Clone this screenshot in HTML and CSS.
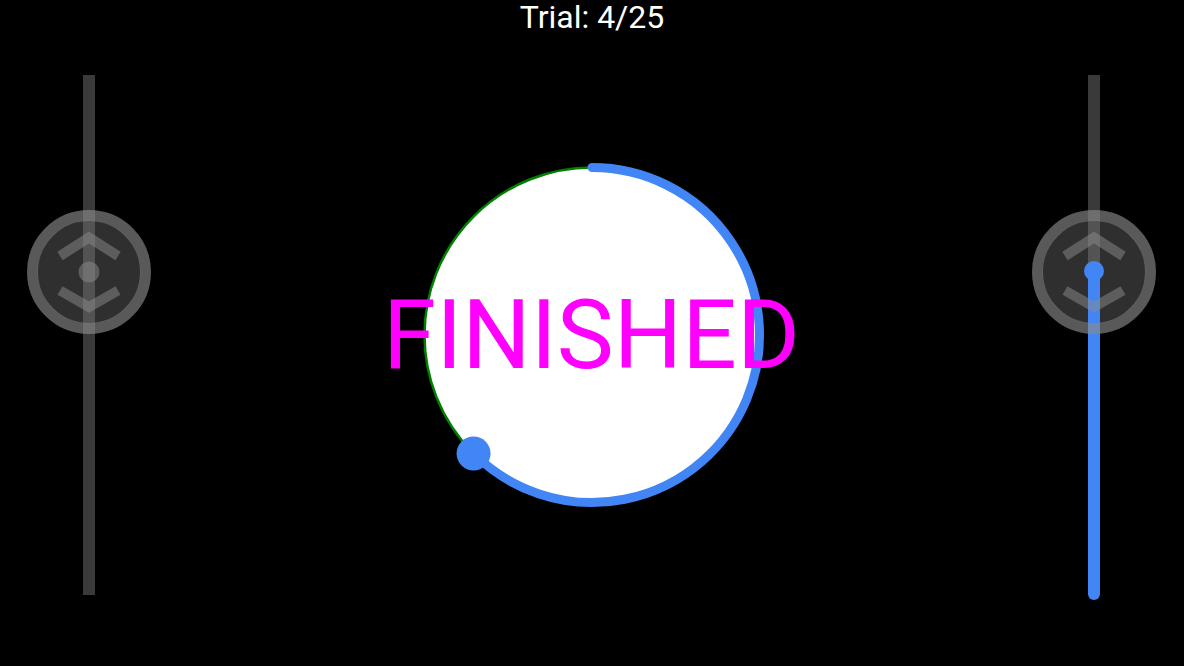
FILE: index.html
```html
<!DOCTYPE html>
<html lang="en">
<head>
<meta charset="utf-8">
<title>Trial</title>
<link rel="stylesheet" href="styles.css">
</head>
<body>
<header class="title">Trial: 4/25</header>
<main class="row">
  <div class="slider">
    <svg class="slider-svg" width="124" height="530" viewBox="0 0 124 530">
      <circle class="knob-inner" cx="62" cy="197" r="51.5"/>
      <rect class="track" x="56" y="0" width="12" height="520"/>
      <g transform="translate(62 197)">
        <circle class="knob-ring" r="56.5"/>
        <polyline class="chev" points="-29,-16 0,-34.5 29,-16"/>
        <polyline class="chev" points="-29,18.5 0,35 29,18.5"/>
        <circle class="knob-dot" r="10.5"/>
      </g>
    </svg>
  </div>
  <div class="stage">
    <div class="stage-cell">
      <svg class="dial" width="360" height="360" viewBox="0 0 360 360">
        <circle class="face" cx="180" cy="180" r="167.5"/>
        <path class="progress" d="M180 12.5 A167.5 167.5 0 1 1 61.56 298.44"/>
        <circle class="handle" cx="61.56" cy="298.44" r="17"/>
      </svg>
      <div class="status">FINISHED</div>
    </div>
  </div>
  <div class="slider slider-right">
    <svg class="slider-svg" width="124" height="530" viewBox="0 0 124 530">
      <circle class="knob-inner" cx="62" cy="197" r="51.5"/>
      <rect class="track" x="56" y="0" width="12" height="520"/>
      <line class="fill" x1="62" y1="196" x2="62" y2="519"/>
      <g transform="translate(62 197)">
        <circle class="knob-ring" r="56.5"/>
        <polyline class="chev" points="-29,-16 0,-34.5 29,-16"/>
        <polyline class="chev" points="-29,18.5 0,35 29,18.5"/>
      </g>
      <circle class="value-dot" cx="62" cy="196" r="10"/>
    </svg>
  </div>
</main>
</body>
</html>
```
FILE: styles.css
```css
html, body {
  margin: 0;
  padding: 0;
  background: #000;
}
body {
  width: 1184px;
  height: 666px;
  overflow: hidden;
  font-family: Roboto, "Liberation Sans", sans-serif;
  color: #fff;
}
.title {
  font-size: 32px;
  line-height: 35px;
  text-align: center;
}
.row {
  display: flex;
  margin-top: 40px;
  padding-left: 27px;
  padding-right: 28px;
}
.slider {
  width: 124px;
  flex: none;
}
.slider-svg {
  display: block;
}
.track {
  fill: rgba(128, 128, 128, 0.45);
}
.knob-inner {
  fill: #2f2f2f;
}
.knob-ring {
  fill: none;
  stroke: rgba(140, 140, 140, 0.64);
  stroke-width: 11;
}
.chev {
  fill: none;
  stroke: rgba(140, 140, 140, 0.5);
  stroke-width: 10;
  stroke-linejoin: miter;
}
.knob-dot {
  fill: rgba(140, 140, 140, 0.5);
}
.fill {
  stroke: #4285f4;
  stroke-width: 12;
  stroke-linecap: round;
}
.value-dot {
  fill: #4285f4;
}
.stage {
  flex: 1;
  padding-top: 80px;
}
.stage-cell {
  display: grid;
  justify-items: center;
  align-items: center;
}
.dial, .status {
  grid-area: 1 / 1;
}
.dial {
  display: block;
}
.face {
  fill: #fff;
  stroke: #008000;
  stroke-width: 2.5;
}
.progress {
  fill: none;
  stroke: #4285f4;
  stroke-width: 9;
  stroke-linecap: round;
}
.handle {
  fill: #4285f4;
}
.status {
  font-size: 96px;
  line-height: 96px;
  color: #ff00ff;
  white-space: nowrap;
}
```
